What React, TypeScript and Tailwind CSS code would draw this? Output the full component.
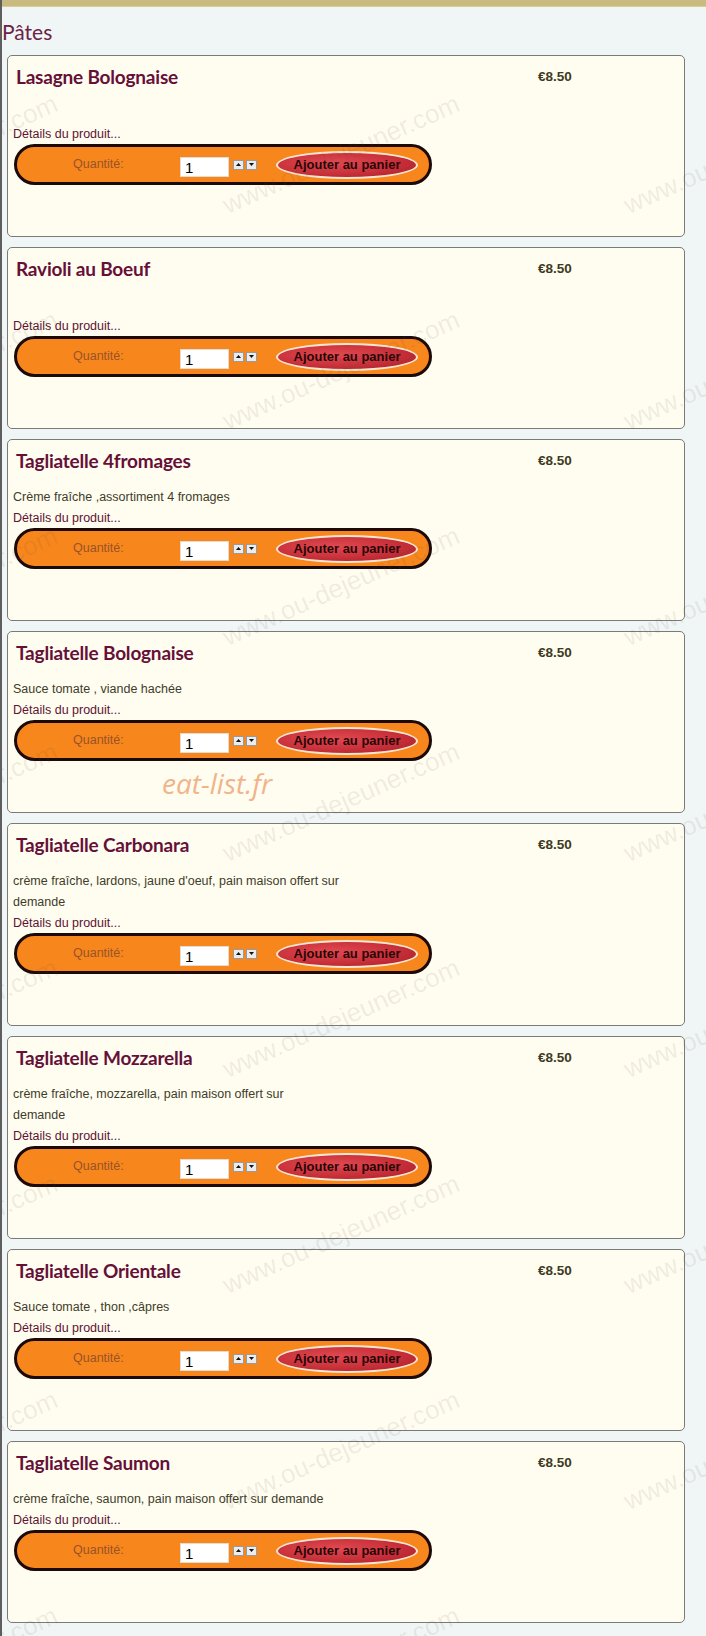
import React from 'react';

type Dish = {
  name: string;
  desc: string;
  price: string;
};

const dishes: Dish[] = [
  { name: 'Lasagne Bolognaise', desc: '', price: '€8.50' },
  { name: 'Ravioli au Boeuf', desc: '', price: '€8.50' },
  { name: 'Tagliatelle 4fromages', desc: 'Crème fraîche ,assortiment 4 fromages', price: '€8.50' },
  { name: 'Tagliatelle Bolognaise', desc: 'Sauce tomate , viande hachée', price: '€8.50' },
  { name: 'Tagliatelle Carbonara', desc: "crème fraîche, lardons, jaune d'oeuf, pain maison offert sur\ndemande", price: '€8.50' },
  { name: 'Tagliatelle Mozzarella', desc: 'crème fraîche, mozzarella, pain maison offert sur\ndemande', price: '€8.50' },
  { name: 'Tagliatelle Orientale', desc: 'Sauce tomate , thon ,câpres', price: '€8.50' },
  { name: 'Tagliatelle Saumon', desc: 'crème fraîche, saumon, pain maison offert sur demande', price: '€8.50' },
];

const body = "font-['Liberation_Sans',Arial,sans-serif]";

function Spin({ up }: { up?: boolean }) {
  return (
    <div className="w-[11px] h-[10px] bg-[#ececec] border border-[#9a9a9a] flex items-center justify-center">
      <svg width="5" height="3" viewBox="0 0 5 3">
        <polygon points={up ? '0,3 5,3 2.5,0' : '0,0 5,0 2.5,3'} fill="#111" />
      </svg>
    </div>
  );
}

function CartBar() {
  return (
    <div className="ml-[1px] w-[418px] h-[41px] rounded-full border-[3px] border-[#1c0a08] bg-[#f7861c] flex items-center">
      <span className={`${body} ml-[56px] w-[107px] text-[12.5px] text-[#975428]`}>Quantité:</span>
      <div className={`${body} mt-[5px] w-[49px] h-[20px] bg-white border border-[#e2dcd4] pl-[4px] text-[15px] leading-[19px] text-black`}>
        1
      </div>
      <div className="ml-[4px] flex gap-[2px]">
        <Spin up />
        <Spin />
      </div>
      <button
        className={`${body} ml-[19px] w-[142px] h-[28px] rounded-[50%] border-2 border-[#f8e6d2] bg-[radial-gradient(ellipse_at_40%_40%,#e24a52_0%,#c8303a_55%,#a51c26_100%)] font-bold text-[13px] text-[#2a0606]`}
      >
        Ajouter au panier
      </button>
    </div>
  );
}

function DishCard({ dish }: { dish: Dish }) {
  return (
    <div className="ml-[5px] w-[678px] rounded-[5px] border border-[#7a7a7a] bg-[#fffdf0] pt-[9px] pl-[5px] pb-[51px]">
      <div className="flex">
        <h3 className="ml-[3px] w-[522px] font-['Lato',sans-serif] font-bold text-[19px] leading-[24px] tracking-[-0.2px] text-[#661038]">
          {dish.name}
        </h3>
        <span className={`${body} font-bold text-[13.5px] leading-[24px] text-[#3d3a22]`}>{dish.price}</span>
      </div>
      <p className={`${body} mt-[14px] w-[360px] min-h-[21px] whitespace-pre-line text-[12.5px] leading-[21px] text-[#403c2a]`}>
        {dish.desc}
      </p>
      <p className={`${body} text-[12.5px] leading-[20px] text-[#5e1234]`}>Détails du produit...</p>
      <CartBar />
    </div>
  );
}

// faint diagonal site stamp tiled over the list
const stampRows = [154, 370, 586, 802, 1018, 1234, 1450, 1666];
const stampCols = [-63, 339, 740];

export default function App() {
  return (
    <div className="relative min-h-screen overflow-hidden bg-[#f0f5f5] border-l-2 border-[#5e5e5e] pb-[15px]">
      <div className="h-[7px] bg-[#c9bb80] border-b border-[#d8cc98]" />
      <h2 className="mt-[11px] mb-[9px] font-['Lato',sans-serif] text-[21px] leading-[28px] text-[#6b2346]">Pâtes</h2>

      <div className="flex flex-col gap-[10px]">
        {dishes.map((d) => (
          <DishCard key={d.name} dish={d} />
        ))}
      </div>

      <div className="pointer-events-none absolute inset-0">
        {stampRows.map((y) =>
          stampCols.map((x) => (
            <span
              key={`${x}-${y}`}
              className="absolute whitespace-nowrap font-['Liberation_Sans',Arial,sans-serif] text-[26px] leading-none text-[#5a503c]/10 -translate-x-1/2 -translate-y-1/2 -rotate-[24deg]"
              style={{ left: x, top: y }}
            >
              www.ou-dejeuner.com
            </span>
          ))
        )}
        <span className="absolute left-[160px] top-[764px] font-['Open_Sans',sans-serif] italic text-[28px] leading-[38px] text-[#f1b48a]">
          eat-list.fr
        </span>
      </div>
    </div>
  );
}
